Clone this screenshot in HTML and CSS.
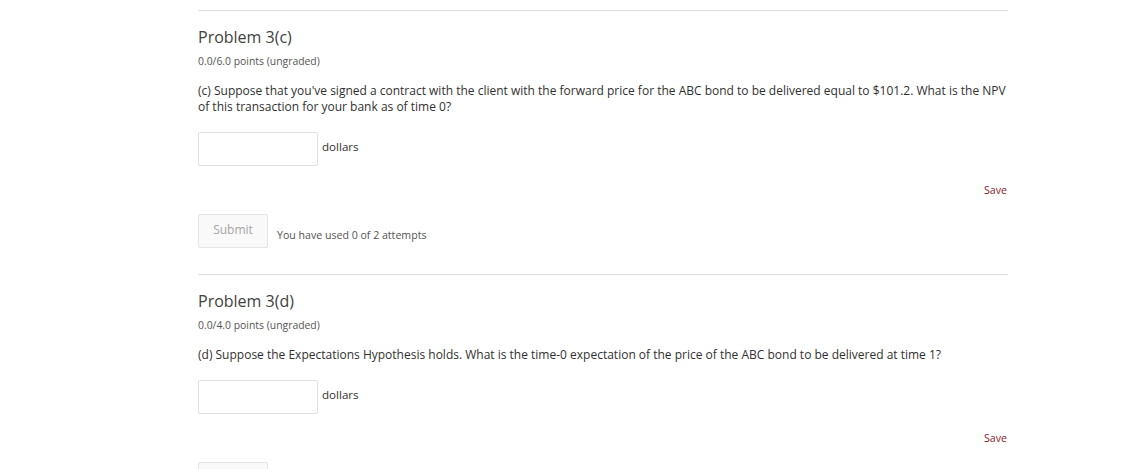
FILE: index.html
```html
<html>
    <head>
        <link rel="stylesheet" href="styles.css">
    </head>
    <body>
        <div class="course-content">
            <div class="problem">
                <h3 class="problem-header">Problem 3(c)</h3>
                <div class="problem-progress">0.0/6.0 points (ungraded)</div>
                <p class="problem-text">(c) Suppose that you've signed a contract with the client with the forward price for the ABC bond to be delivered equal to $101.2. What is the NPV of this transaction for your bank as of time 0?</p>
                <div class="answer-row">
                    <input type="text" class="answer-input">
                    <span class="answer-unit">dollars</span>
                </div>
                <div class="save-row"><span class="save-link">Save</span></div>
                <div class="submit-row">
                    <button class="submit-btn" disabled>Submit</button>
                    <span class="attempts">You have used 0 of 2 attempts</span>
                </div>
            </div>

            <div class="problem">
                <h3 class="problem-header">Problem 3(d)</h3>
                <div class="problem-progress">0.0/4.0 points (ungraded)</div>
                <p class="problem-text">(d) Suppose the Expectations Hypothesis holds. What is the time-0 expectation of the price of the ABC bond to be delivered at time 1?</p>
                <div class="answer-row">
                    <input type="text" class="answer-input">
                    <span class="answer-unit">dollars</span>
                </div>
                <div class="save-row"><span class="save-link">Save</span></div>
                <div class="submit-row">
                    <button class="submit-btn" disabled>Submit</button>
                    <span class="attempts">You have used 0 of 2 attempts</span>
                </div>
            </div>
        </div>
    </body>
</html>
```

FILE: styles.css
```css
body {
  margin: 0;
  background: #fff;
  font-family: "Open Sans", "Liberation Sans", sans-serif;
  color: #313131;
}

.course-content {
  width: 810px;
  margin: 0 0 0 198px;
  padding-top: 10px;
}

.problem {
  border-top: 1px solid #ddd;
  padding-top: 15px;
  padding-bottom: 26px;
}

.problem-header {
  margin: 0;
  font-size: 16px;
  font-weight: 400;
  line-height: 22px;
  color: #414141;
}

.problem-progress {
  margin-top: 6px;
  font-size: 10.4px;
  line-height: 14px;
  color: #555;
}

.problem-text {
  margin: 15px 0 0 0;
  font-size: 12px;
  line-height: 16px;
  color: #313131;
}

.answer-row {
  display: flex;
  align-items: flex-start;
  margin-top: 17px;
}

.answer-input {
  width: 120px;
  height: 34px;
  box-sizing: border-box;
  border: 1px solid #e0e0e0;
  border-radius: 2px;
  margin: 0;
}

.answer-unit {
  margin-left: 4px;
  margin-top: 7px;
  font-size: 11.6px;
  line-height: 16px;
  color: #313131;
}

.save-row {
  display: flex;
  justify-content: flex-end;
  margin-top: 17px;
  line-height: 14px;
}

.save-link {
  font-size: 10.6px;
  color: #8a1a2c;
  margin-right: 1px;
}

.submit-row {
  display: flex;
  align-items: center;
  margin-top: 17px;
}

.submit-btn {
  width: 70px;
  height: 34px;
  border: 1px solid #e4e4e4;
  border-radius: 2px;
  background: #f9f9f9;
  color: #a5a5a5;
  font-family: "Open Sans", "Liberation Sans", sans-serif;
  font-size: 12px;
  padding: 0 0 4px 0;
}

.attempts {
  margin-left: 9px;
  margin-top: 8px;
  font-size: 10.6px;
  line-height: 14px;
  color: #555;
}
```
